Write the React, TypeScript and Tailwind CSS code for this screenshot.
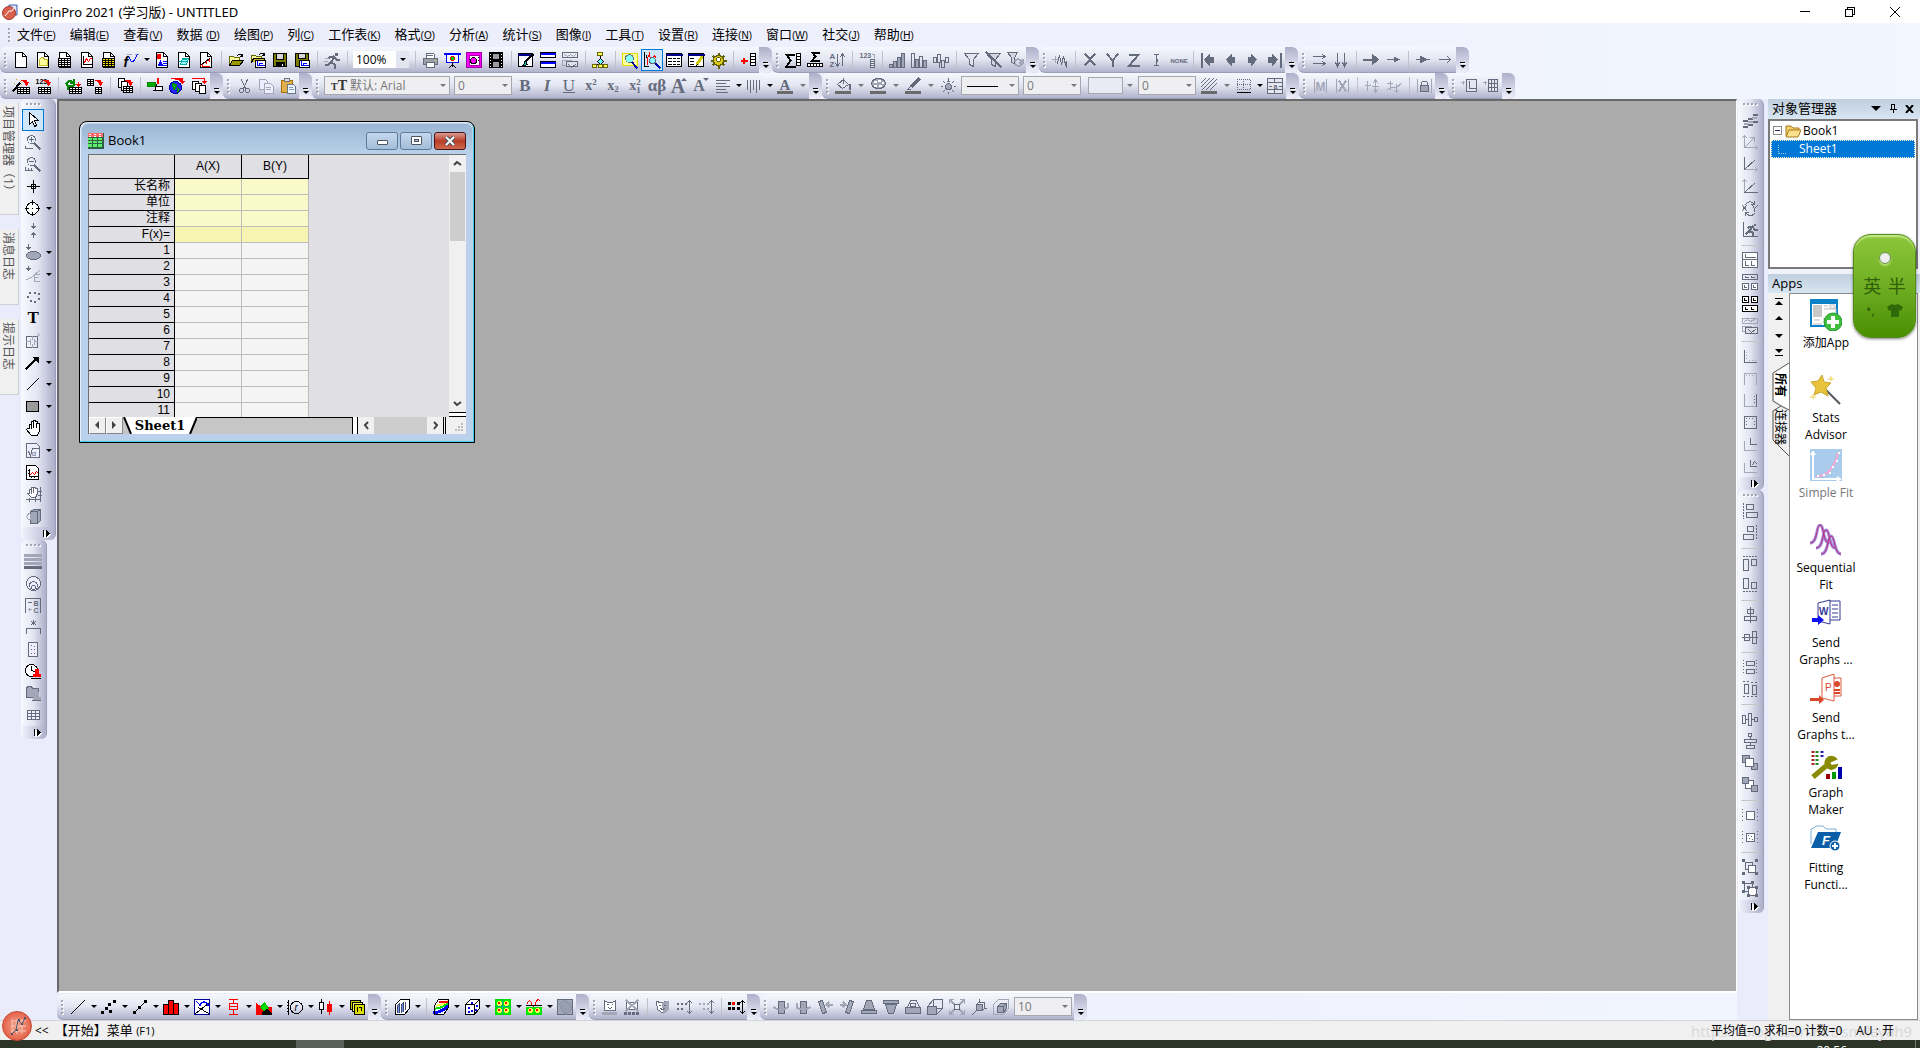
import { createElement, type ReactNode } from 'react';
import clsx from 'clsx';

/* ---------- icon drawing helpers (16 x 16 grid, integers are pixel centres) ---------- */

const K = '#000';
const G = '#646b7c';
const L = '#a2a7b8';
const R = '#f00';
const B = '#00f';
const Y = '#ffff50';

const g = (...nodes: ReactNode[]) => createElement('g', null, ...nodes);
const p = (d: string, s = K, f = 'none', w = 1) => <path d={d} stroke={s} fill={f} strokeWidth={w} />;
const box = (x: number, y: number, w: number, h: number, s = K, f = 'none') => (
  <rect x={x} y={y} width={w} height={h} stroke={s} fill={f} />
);
const ring = (x: number, y: number, r: number, s = K, f = 'none') => (
  <circle cx={x} cy={y} r={r} stroke={s} fill={f} />
);
const txt = (t: string, x: number, y: number, size: number, c = K, extra = '') => (
  <text x={x} y={y} fontSize={size} fill={c} stroke="none" className={extra}>
    {t}
  </text>
);
const page = (s = K) => g(p('M2 0h7l4 4v11h-11z', s, '#fff'), p('M9 0v4h4', s));
const grid = (x: number, y: number, cols: number, rows: number, s = K, f = '#fff', cw = 3, ch = 2) =>
  g(
    box(x, y, cols * cw, rows * ch, s, f),
    p(Array.from({ length: cols - 1 }, (_, i) => `M${x + (i + 1) * cw} ${y}v${rows * ch}`).join('') || 'M0 0', s),
    p(Array.from({ length: rows - 1 }, (_, i) => `M${x} ${y + (i + 1) * ch}h${cols * cw}`).join('') || 'M0 0', s),
  );
const redDown = p('M8 2h5v4M11 4l2 3 2-3z', R, R);
const stamp = (c: string, x: number, y: number) => p(`M${x} ${y}h3v3l-1 2h3v2h-7v-2h3l-1-2z`, c, c);
const magnifier = (s: string, f: string) => g(p('M9 9l5 5', s, 'none', 2), ring(6, 5, 4, s, f));
const layout = (x: number, y: number, w: number, h: number, s = G) =>
  g(box(x, y, w, h, s, '#fff'), p(`M${x + 2} ${y + 2}v${h - 4}h${w - 4}`, s));
const spot = (x: number, y: number) => g(ring(x, y, 2, Y, Y), box(x - 1, y - 1, 1, 1, R, R));

const icons: Record<string, ReactNode> = {
  // standard
  'New Project': page(),
  'New Folder': g(page(), p('M4 7l2-2h2l1 2h3v6h-8z', '#c9b92c', '#ffff9c')),
  'New Workbook': g(page(), grid(1, 6, 4, 4)),
  'New Graph': g(page(), p('M4 4v8h8', K), p('M5 10l2-4 2 3 2-3 1 0', R)),
  'New Matrix': g(page(), grid(1, 6, 4, 4, K, '#ffe500')),
  'New Function': g(p('M4 2h4M12 2h3', L), p('M4 4l1 0 3 5h2l4-7', B), txt('f', 0, 14, 14, K, 'font-bold italic')),
  'New Layout': g(page(), p('M3 2h3v4h-3z', R, R), p('M4 13l2-4 2 4z', B, B), p('M9 9h3M9 11h3M9 13h3', B)),
  'New Notes': g(page(), p('M4 12l2-6h6l-2 6zM3 9h7M6 7h4', '#0aa', '#9ff')),
  'Digitize': g(page(), p('M2 13l9-6v2M4 12v2h7M8 8v3', R), p('M3 12l8-6', K)),
  'Open': g(p('M1 13v-9h4l1 1h5v3', '#660', '#ffff9c'), p('M1 13l3-5h11l-4 5z', K, '#9a9a00'), p('M9 3q3-3 5 1M12 4h2v-2')),
  'Open Template': g(p('M1 10v-7h4l1 1h5v3', '#660', '#ffff9c'), p('M1 10l2-4h11v2', K, '#c9b92c'), p('M9 2q3-3 5 1M12 3h2v-2'), box(5, 8, 10, 7, K, '#fff'), p('M7 9v4h7M9 12v-1h3', B)),
  'Save': g(box(1, 1, 13, 13, K, '#7c7c00'), box(4, 1, 7, 6, K, '#d8d8d8'), box(4, 10, 8, 4, K, K), p('M10 12v1', '#fff')),
  'Save Template': g(box(1, 1, 13, 13, K, '#7c7c00'), box(4, 1, 7, 5, K, '#d8d8d8'), box(5, 8, 10, 7, K, '#fff'), p('M7 9v4h7M9 12v-1h3', B)),
  'Recalculate': g(p('M11 1h1v1h-1zM5 5l4-1 3 3h2M9 5l-2 5 3 2v3M6 10l-2 2h-3', G, 'none', 2), p('M1 6h3M0 9h3', L)),
  'Print': g(p('M4 6v-5h7l1 1v4M5 3h5', G, '#fff'), p('M1 6h14v6h-14z', G, '#9aa0a8'), box(4, 10, 8, 5, G, '#fff'), p('M13 8h0', '#ee0')),
  'Slide Show': g(p('M0 1h15', B, B, 2), box(2, 2, 12, 8, B, '#fff'), ring(8, 6, 2, R, '#0c0'), p('M8 10v4M5 15l3-3 3 3', K)),
  'Record': g(box(0, 0, 15, 15, '#a000a0', '#f0f'), box(3, 3, 10, 10, '#a000a0', '#fff'), ring(7, 8, 3, K, '#f0f'), p('M12 5h0M12 8h0', K)),
  'Video': g(box(1, 0, 13, 15, K, '#000'), box(4, 1, 7, 6, K, '#9a9aa2'), box(4, 9, 7, 6, K, '#9a9aa2'), p('M2 2h0M2 5h0M2 8h0M2 11h0M2 14h0M13 2h0M13 5h0M13 8h0M13 11h0M13 14h0', '#fff')),
  'Format Painter': g(box(0, 1, 14, 13, K, '#fff'), p('M0 2h14', '#008', K, 2), p('M14 2l-7 7', K, 'none', 2), p('M7 9l-3 5 5-2z', K, '#0cc')),
  'Merge Rows': g(box(0, 0, 15, 5, K, '#fff'), p('M1 1h13', B, B, 2), box(0, 9, 15, 6, K, '#fff'), p('M1 10h13', B, B, 2)),
  'Refresh Views': g(box(0, 0, 15, 5, G), p('M2 2l3 2 3-2 3 2 2-2', L), box(0, 8, 9, 5, L), box(4, 9, 11, 5, G, '#dfe0ea'), p('M6 12l3 3 4-3', G)),
  'Hierarchy': g(box(5, 0, 5, 3, '#660', Y), p('M8 4v2M8 11v1M2 12h12'), p('M8 6l3 3-3 3-3-3z', K, '#6ff'), box(0, 12, 4, 3, '#660', Y), box(6, 12, 4, 3, '#660', Y), box(11, 12, 4, 3, '#660', Y)),
  'Project Explorer': g(p('M0 1h15v12h-15z', '#dd0', '#ffffa0'), p('M9 9l5 6', '#00a', 'none', 2), ring(7, 6, 4, G, '#8ff')),
  'Object Manager': g(p('M0 0v14h4M2 3v2M0 5h0M0 9h0'), p('M3 12v-6l2-5 1 6 4-4 1 2', R), p('M10 10l5 5', '#00a', 'none', 2), ring(8, 8, 3, G, '#8ff')),
  'Results Log': g(box(0, 1, 15, 13, K, '#fff'), p('M0 2h15', '#008', K, 2), p('M2 6h3M7 6h2M11 6h2M2 9h3M7 9h2M11 9h2M2 12h3M7 12h2M11 12h2')),
  'Script Window': g(box(0, 1, 15, 13, K, '#fff'), p('M0 2h15', '#008', K, 2), p('M2 6h3M2 9h3M2 12h3'), p('M13 5l-4 6', '#cc0', 'none', 3), p('M8 13l1-1')),
  'Code Builder': g(p('M8 1v14M1 8h14M3 4l10 8M3 12l10-8', '#5f5f00', 'none', 2), ring(8, 8, 5, '#5f5f00', '#d8c820'), ring(8, 7, 2, '#5f5f00', '#fff')),
  'Add Column': g(p('M1 8h5M3 6v4', R, R, 2), grid(10, 1, 1, 4, K, '#fff', 5, 3)),
  // column
  'Statistics on Columns': g(p('M8 2h-7l4 6-4 6h8', K, 'none', 2), grid(11, 1, 1, 4, K, '#fff', 4, 3)),
  'Statistics on Rows': g(p('M11 0h-6l3 4-3 4h6', K, 'none', 2), grid(0, 11, 5, 1, K, '#fff', 3, 3)),
  'Sort': g(txt('A', 0, 6, 8, G, 'font-bold'), txt('Z', 0, 14, 8, G, 'font-bold'), p('M8 2v11M6 11l2 3 2-3M13 13v-11M11 4l2-3 2 3', G)),
  'Set Column Values': g(txt('123', 0, 5, 7, G, 'font-bold'), p('M13 2h2v3', L), grid(11, 7, 1, 4, G, '#eee', 4, 2)),
  'Column Plot': g(box(0, 12, 3, 3, G, L), box(4, 9, 3, 6, G, L), box(8, 5, 3, 10, G, L), box(12, 1, 3, 14, G, L)),
  'Histogram': g(box(0, 1, 3, 14, G), box(4, 7, 3, 8, G, L), box(8, 4, 3, 11, G), box(12, 8, 3, 7, G, L)),
  'Normalize': g(box(0, 5, 3, 5, G), box(4, 2, 3, 8, G), box(8, 8, 3, 7, G), box(12, 5, 3, 5, G), p('M6 11v4', G)),
  'Filter': p('M1 1h14l-5 6v7l-4-2v-5z', G, '#e4e5ee'),
  'Disable Filter': g(p('M1 1h14l-5 6v7l-4-2v-5z', G, '#d4d5de'), p('M1 0l14 14', G, 'none', 2)),
  'Reapply Filter': g(p('M0 0h10l-3 5v6l-3-1v-5z', G, '#d4d5de'), p('M8 8q3-3 6 1M15 7v3h-3M14 12q-3 3-6 0', L, 'none', 2)),
  // axes
  'Average Curves': g(p('M0 7h6M3 4v6', L), p('M5 11l2-8 2 9 2-8 2 8 1-3v6', G)),
  'Set X': p('M3 2l9 10M12 2l-9 10', G, 'none', 2),
  'Set Y': p('M3 2l5 6 5-6M8 8v5', G, 'none', 2),
  'Set Z': p('M3 2h9l-9 11h9', G, 'none', 2),
  'Set Error': g(p('M6 2h4M6 13h4M8 2v11', G), p('M8 7v1', G, 'none', 2)),
  'Set None': g(txt('NONE', 0, 10, 6, G, 'font-bold')),
  'First': g(p('M1 1v13', G, G, 2), p('M4 7l5-5v3h4v5h-4v3z', G, G)),
  'Previous': p('M4 7l5-5v3h3v5h-3v3z', G, G),
  'Next': p('M12 7l-5-5v3h-3v5h3v3z', G, G),
  'Last': g(p('M14 1v13', G, G, 2), p('M11 7l-5-5v3h-4v5h4v3z', G, G)),
  'Horizontal Arrows': p('M2 4h11M11 2l3 2-3 2M2 11h11M11 9l3 2-3 2', G),
  'Vertical Arrows': p('M4 1v12M2 10l2 4 2-4M11 1v12M9 10l2 4 2-4', G),
  'Large Arrow': g(p('M0 7h9', G, G, 2), p('M9 2l6 5-6 5z', G, G)),
  'Small Arrow': g(p('M2 7h10', G), p('M9 5l4 2-4 2z', G, G)),
  'Filled Arrow': g(p('M1 7h13', G), p('M5 4l6 3-6 3z', G, G)),
  'Open Arrow': p('M2 7h11M10 4l3 3-3 3', G),
  // import
  'Import Wizard': g(p('M0 12l6-7', K, 'none', 2), p('M3 1h0M7 3h0M1 5h0M8 6h0', '#da0'), redDown, grid(4, 9, 4, 3)),
  'Import ASCII': g(txt('123', 0, 5, 7, K, 'font-bold'), redDown, grid(3, 9, 4, 3)),
  'Reimport': g(p('M1 5q3-5 7-1M8 1v3h-3M9 6q-4 4-7 1M2 10v-3h2', '#080', 'none', 2), p('M13 4v3M11 6l2 2 2-2z', R, R), grid(4, 9, 4, 3)),
  'Import Sheet': g(grid(0, 1, 2, 3), redDown, grid(8, 9, 2, 3)),
  'Clone Import': g(box(1, 0, 6, 9, K, '#fff'), box(4, 3, 6, 9, K, '#fff'), redDown, grid(6, 8, 3, 3)),
  'Database': g(p('M0 4h8v4h-8z', '#080', '#0a0'), p('M9 6v6h-3', K), p('M10 0v4', R, R, 2), box(8, 8, 7, 4, K, '#fff')),
  'Web': g(ring(6, 9, 6, '#00a', '#22f'), p('M3 5l4 1-1 4-2 1zM8 9l2 2-2 3z', '#080', '#0a0'), p('M2 0h11v3M11 3l2 2 2-2z', R, R)),
  'Import Multiple': g(box(1, 3, 6, 8, K, '#fff'), box(4, 5, 6, 8, K, '#fff'), box(8, 7, 6, 8, K, '#fff'), p('M1 0h12v3', R), p('M11 3l2 2 2-2z', R, R)),
  // edit
  'Cut': g(p('M5 1l4 9M11 1l-4 9', G, 'none', 1), ring(5, 12, 2, G), ring(11, 12, 2, G)),
  'Copy': g(p('M1 1h6l2 2v8h-8z', L, '#eef'), p('M6 5h6l3 3v7h-9z', L, '#eef'), p('M8 9h4M8 11h4', L)),
  'Paste': g(box(1, 2, 11, 12, '#a87008', '#e2b04a'), box(4, 0, 5, 3, '#777', '#ddd'), p('M7 6h6l2 2v7h-8z', '#678', '#eef6ff'), p('M9 9h3M9 11h4', '#89b')),
  // format
  'Font Colour': g(txt('A', 2, 11, 15, G, 'font-bold font-[Liberation_Serif]'), p('M1 14h13', '#6a6a6a', G, 3)),
  'Align': p('M1 2h13M1 5h9M1 8h13M1 11h9M1 14h11', G),
  'Line Pattern': p('M1 2v9M4 2v12M7 2v9M10 2v12M13 2v9', G),
  'Fill': g(p('M2 6l6-5 5 5-6 4z', G, '#e4e5ee'), p('M8 0v5', G), p('M14 6v4', G, 'none', 2), p('M1 14h13', '#6a6a6a', G, 3)),
  'Palette': g(<ellipse cx={8} cy={5} rx={7} ry={5} stroke={G} fill={L} />, p('M4 3h1M8 2h1M12 4h0M4 7h1M9 7h1', '#fff', '#fff', 2), p('M1 14h13', '#6a6a6a', G, 3)),
  'Line Colour': g(p('M13 1l-6 6', G, 'none', 3), p('M5 8l-2 2M2 11h3', G), p('M1 14h13', '#6a6a6a', G, 3)),
  'Light': g(ring(8, 8, 3, G, L), p('M8 0v2M8 14v1M1 8h1M14 8h1M3 3l1 1M12 12l1 1M3 13l1-1M12 4l1-1M7 3h2', G)),
  'Hatch': g(p('M0 4l4-4M0 8l8-8M1 11l11-11M5 11l10-10M9 11l6-6', G), p('M1 14h13', '#6a6a6a', G, 3)),
  'Borders': g(<path d="M1 1h13v10h-13zM7 1v10M1 6h13" stroke={G} strokeDasharray="0 2" />, p('M1 14h13', K, K, 1)),
  'Merge Cells': g(box(0, 0, 15, 15, G, '#e4e5ee'), p('M0 4h15M0 11h15M7 0v4M7 11v4M2 8h2M12 8h2', G), txt('a', 6, 10, 7, G, 'font-bold')),
  'Mask': g(p('M2 1v13M14 1v13', L), txt('M', 3, 12, 12, L, 'font-bold')),
  'Unmask': g(p('M2 1v13M14 1v13', L), p('M5 3l6 9M11 3l-6 9', L, 'none', 2)),
  'Shift Rows': p('M3 3v9M1 7h5M11 1v13M9 4l2-3 2 3M9 11l2 3 2-3M8 8h6', L, 'none', 1),
  'Shift Curve': p('M1 5h5M4 3v8M1 11l5-2 4 0 5-4M10 6v8M8 12l2 2 2-2', L, 'none', 1),
  'Lock': g(p('M1 1v13M15 1v13', L), p('M5 7v-3q3-3 6 0v3', G), box(4, 7, 8, 6, G, L)),
  'Add Layer': g(p('M0 4h3M2 3v3', L), box(5, 1, 10, 12, G, '#e4e5ee'), p('M8 3v7h6', G)),
  'Add Table': g(p('M0 4h3M2 3v3', L), grid(5, 1, 3, 3, G, '#e4e5ee', 3, 4)),
  // tools
  'Pointer': p('M4 0v12l3-3 2 5 2-1-2-5h4z', K, '#fff'),
  'Zoom In': g(magnifier(G, '#e8eef8'), p('M4 5h4M6 3v4M0 12v2h7', G)),
  'Zoom Out': g(magnifier(G, '#e8eef8'), p('M4 5h4M0 11v3h7M3 12v2M6 12v2', G)),
  'Reader': g(p('M8 2v12M2 8h12'), box(6, 6, 4, 4)),
  'Data Reader': g(ring(7, 8, 6, K, '#fff'), p('M7 0v4M7 12v3M0 8h3M11 8h3M7 8h0')),
  'Data Selector': p('M8 1v5M6 4l2 2 2-2zM8 15v-5M6 12l2-2 2 2z', G, G),
  'Region Mask': g(p('M3 0v5M1 3l2 2 2-2z', G, G), <ellipse cx={8} cy={11} rx={7} ry={4} stroke={G} fill={L} />),
  'Curve Mask': g(p('M3 0v4M1 2l2 2 2-2z', G, G), p('M1 13l5-2 8-7M9 8h5M9 8v7h5M9 11h3', L)),
  'Draw Data': p('M4 4h0M9 4h0M13 5h0M2 8h0M5 12h0M13 10h0M9 13h0', G, G, 2),
  'Text': txt('T', 2, 12, 17, K, 'font-bold font-[Liberation_Serif]'),
  'Annotation': g(box(1, 4, 11, 11, G), p('M7 4v3M7 12v3M1 9h3M9 9h3M5 7v5M9 7v5', L), txt('A', 11, 4, 6, L)),
  'Arrow': g(p('M1 14l9-9', K, 'none', 2), p('M8 3h5v5z', K, K)),
  'Line': p('M2 13l11-11', K, 'none', 1),
  'Rectangle': box(1, 3, 12, 10, K, '#9b9b9b'),
  'Pan': g(p('M4 8v-4h2v-3h2v-1h2v1h2v2h2v7l-2 5h-6l-5-6 1-1z', K, '#fff'), p('M6 4v4M8 2v5M11 3v4')),
  'Equation': g(p('M1 1h10l3 3v11h-13z', G, '#eef'), p('M3 9l2 4 2-7h6', G), txt('α', 6, 13, 8, G)),
  'Insert Graph': g(p('M1 1h9l3 3v11h-12z', K, '#fff'), p('M4 5v7h8M3 6h0M3 9h0M6 13h0M9 13h0'), p('M5 10l2-2 2 2 2-3 1 1', R)),
  'Pan Axis': g(p('M4 7v-4h2v-2h4v1h2v5l-2 4h-4l-4-4z', G, '#fff'), p('M6 3v4M8 2v4M15 1v14M13 5h3M13 9h3M1 13h14M4 12v3M10 12v3', G)),
  'Rotate 3D': g(p('M5 3l3-2h7v11l-3 3h-7z', G, L), p('M5 3h7v12M12 3l3-2', G), p('M1 8q2-4 4-2v5q-2 1-4-3', L)),
  // object
  'Line Width': g(p('M0 2h15M0 6h15M0 10h15', L, L, 3), p('M0 14h15', G, G, 3)),
  'Circles': g(ring(8, 8, 7, G, '#eef'), ring(8, 10, 4, G, '#eef'), ring(8, 12, 2, G)),
  'Legend': g(p('M0 15v-14h15v14', G), p('M3 5h3', G), p('M3 12h3M4 11v2', L), txt('B', 8, 8, 7, G, 'font-bold'), txt('C', 8, 15, 7, G, 'font-bold')),
  'Asterisk Bracket': g(p('M8 1v4M6 2l4 3M10 2l-4 3', G), p('M1 14v-5h14v5', G)),
  'Scale': g(box(3, 1, 9, 14, G, '#eef'), p('M6 4h0M6 8h0M6 12h0M9 5h0M9 8h0M9 12h0', G, G)),
  'Date Stamp': g(ring(6, 7, 6, K, '#fff'), p('M6 3v4l3 1'), stamp(R, 10, 6), p('M6 15h9')),
  'Project Stamp': g(p('M1 3l1-2h4l1 2h6v9h-12z', G, L), stamp(L, 10, 7), p('M7 15h8', G)),
  'Table': grid(2, 3, 3, 3, G, '#eef', 4, 3),
  // layers
  'Stagger': g(p('M6 6h3M11 2h3M1 8h3M6 6h3M11 9h3M6 12h3M1 14h3', G, 'none', 2), p('M10 5h3M6 9h3M2 11h2', L, 'none', 2)),
  'Rotate Axes': g(p('M2 1v12h13M0 3l2-2 2 2M13 11l2 2-2 2', L), p('M3 12l8-8M8 3h4v4', L)),
  'Skew Axes': g(p('M2 13h13M13 11l2 2-2 2', L), p('M2 1v12l10-9', G)),
  'Reset Axes': g(p('M2 1v12M0 3l2-2 2 2', L), p('M2 14h13M3 13l9-8', G)),
  'Swap XY': g(p('M3 4q4-5 8-1M12 1v3h-3M12 13q-4 4-8 0M3 15v-3h3M0 5l4 5M4 5l-4 5M10 5l2 3 3-3M12 8v3', G)),
  'Speed Mode': g(p('M1 0v14h14', G), p('M12 2h0M6 5l4-1 2 3h2M9 5l-2 4 3 1v2M6 9l-2 2', G, 'none', 2)),
  'Merge Layers': g(box(0, 0, 15, 15, G, '#fff'), p('M3 2v3h10M3 9v4h3M9 9v4h3M0 7h15', G)),
  'Extract Layers': g(box(0, 0, 15, 5, G), p('M3 2v1h3M9 2v1h3', G), layout(0, 9, 6, 6), layout(9, 9, 6, 6)),
  'Arrange Layers': g(layout(0, 0, 6, 6, K), layout(9, 0, 6, 6, K), box(0, 9, 15, 6, K, '#fff'), p('M3 11v2h2M9 11v2h2')),
  'Duplicate Layers': g(box(0, 0, 15, 5, L), p('M2 3l3-2 3 2 4-2', L), box(0, 8, 9, 5, L), box(3, 9, 12, 6, G, '#dfe0ea'), p('M6 11l3 3 4-3', G)),
  'Axis Bottom Left': g(p('M2 2v12h12', G), p('M4 4h0M4 7h0M4 10h0M7 12h0M10 12h0M13 12h0', L)),
  'Axis Top': g(p('M2 14v-11h12v11', L), p('M4 5h0M7 5h0M10 5h0', L)),
  'Axis Right': g(p('M2 2v12h12', L), p('M14 2v12M12 4h0M12 7h0M12 10h0', G)),
  'Axis Frame': g(box(2, 2, 12, 12, G), p('M4 4h0M7 4h0M10 4h0M4 7h0M4 10h0M12 7h0M12 10h0', G)),
  'Inset': g(p('M2 5v9h12', L), p('M8 2v6h6', G)),
  'Inset Data': g(p('M2 5v9h12', L), p('M8 2v6h6M10 6l2-3 2 2', G)),
  // alignment
  'Align Left': g(p('M1 0v1M1 3v1M1 6v1M1 9v1M1 12v1M1 15v0', G), box(4, 1, 7, 5, G), box(4, 9, 11, 5, G)),
  'Align Right': g(p('M14 0v1M14 3v1M14 6v1M14 9v1M14 12v1', G), box(5, 1, 6, 5, G), box(1, 9, 10, 5, G)),
  'Align Top': g(p('M1 1h1M4 1h1M7 1h1M10 1h1M13 1h1', G), box(1, 4, 5, 11, G), box(9, 4, 5, 6, G)),
  'Align Bottom': g(p('M1 14h1M4 14h1M7 14h1M10 14h1M13 14h1', G), box(1, 1, 5, 10, G), box(9, 5, 5, 6, G)),
  'Align Centre': g(p('M8 0v15', G), box(5, 2, 6, 4, G), box(2, 9, 12, 4, G)),
  'Align Middle': g(p('M0 8h15', G), box(2, 5, 5, 6, G), box(10, 2, 4, 12, G)),
  'Same Width': g(box(4, 2, 8, 4, G), box(4, 10, 8, 4, G), p('M1 1h0M1 4h0M1 7h0M14 1h0M14 4h0M14 7h0M1 10h0M1 13h0M14 10h0M14 13h0', G)),
  'Same Height': g(box(2, 3, 4, 9, G), box(10, 4, 4, 9, G), p('M1 0h1M5 0h1M9 1h1M13 1h1M1 15h1M5 15h1M9 15h1M13 15h1', G)),
  'Distribute H': g(box(0, 4, 3, 8, G), box(6, 2, 3, 12, G), box(12, 6, 3, 4, G), p('M4 8h1M10 8h1', G)),
  'Distribute V': g(box(6, 0, 3, 3, G), box(2, 6, 12, 3, G), box(4, 12, 8, 3, G), p('M8 4v1M8 10v1', G)),
  'Bring Front': g(box(0, 0, 7, 7, G, L), box(9, 8, 6, 6, G, L), box(3, 3, 8, 8, G, '#fff')),
  'Send Back': g(box(3, 3, 8, 8, G, '#fff'), box(0, 0, 6, 6, G, L), box(9, 8, 6, 6, G, L)),
  'Group Edit': g(box(4, 4, 8, 8, G, '#fff'), p('M0 2h0M0 5h0M0 9h0M0 13h0M15 2h0M15 5h0M15 9h0M15 13h0', G)),
  'Ungroup Edit': g(box(4, 4, 8, 8, G, '#fff'), p('M6 6h0M9 7h0M7 9h0M10 10h0M0 2h0M0 5h0M0 9h0M0 13h0M15 2h0M15 5h0M15 9h0M15 13h0', G)),
  'Group': g(box(3, 3, 7, 7, G), box(6, 6, 7, 7, G, '#fff'), p('M1 1h0M14 1h0M1 14h0M14 14h0', G, G, 3)),
  'Ungroup': g(box(2, 2, 8, 8, G), box(6, 6, 8, 8, G, '#fff'), p('M1 1h0M10 1h0M1 10h0M6 6h0M14 6h0M6 14h0M14 14h0', G, G, 3)),
  // 2D graphs
  'Line Plot': p('M1 14l13-13'),
  'Scatter Plot': p('M1 13h0M5 9h0M9 12h0M8 5h0M13 2h0', K, K, 3),
  'Line + Symbol': g(p('M2 13l11-11'), p('M2 13h0M7 8h0M13 2h0', K, K, 3)),
  'Bar Plot': g(box(0, 5, 5, 10, K, R), box(5, 1, 5, 14, K, R), box(10, 4, 5, 11, K, R)),
  'Multi Panel': g(box(0, 0, 15, 15, '#009', '#fff'), p('M1 14l13-10M4 8l10 6'), p('M2 2l3 3 4-3 4 2', B), p('M5 5h0M9 2h0M13 5h0', B, B, 2)),
  'Box Plot': p('M4 0h8M8 0v4M4 4h8v6h-8zM4 7h8M8 10v5M4 15h8', R),
  'Area Plot': g(p('M0 4l6 5 9-1v7h-15z', R, R), p('M4 8l4-5 4 6-4 3z', '#0b0', '#0d0'), p('M6 13l5-3 4 4v1h-9z', K, K)),
  'Polar Plot': g(p('M1 1v14M0 3h1M0 6h1M0 9h1M0 12h1'), ring(9, 8, 6), txt('r', 7, 11, 10, K, 'italic')),
  'Stock Plot': g(p('M3 0v14'), box(1, 3, 4, 7, K, '#fff'), p('M11 2v13', R), box(9, 5, 4, 7, R, R)),
  'Template Library': g(box(1, 1, 10, 9, K, '#cc0'), box(3, 3, 10, 9, K, Y), box(5, 5, 10, 10, K, '#dd0'), p('M8 12v-4M10 8h2v3')),
  // 3D graphs
  '3D Bars': g(p('M1 5l5-5h9v9l-5 6h-9z', K, '#fff'), p('M3 13v-7l2-2v9M7 13v-8l2-2v9M11 10v-7', '#446', '#69f')),
  '3D Surface': g(p('M1 6l4-6h10v8l-5 7h-9z', K, '#fff'), p('M1 13q6 0 13-6', B, 'none', 3), p('M2 9q6 0 12-5', '#0d0', 'none', 2), p('M3 6q5 0 11-4', Y, 'none', 2), p('M6 2h7', R, 'none', 2), p('M1 6l4-6h10v8l-5 7h-9z')),
  '3D Scatter': g(p('M1 5l5-5h9v9l-5 6h-9zM1 5h9v10M10 5l5-5', K, '#fff'), p('M4 8h0M7 11h0M7 3h0M12 6h0M4 12h0M11 10h0', B, B, 2)),
  'Contour': g(box(0, 0, 15, 15, '#0d0', '#0e0'), p('M7 0v15M0 7h15', '#0a8'), spot(4, 4), spot(11, 4), spot(4, 11), spot(11, 11)),
  'Heatmap': g(p('M1 4q2-6 4 0t4 0 4-3', R), p('M0 6h15'), box(0, 8, 15, 7, '#0d0', '#0e0'), spot(4, 11), spot(11, 11)),
  'Image Plot': g(box(0, 0, 15, 15, G, L), p('M2 4l5-3 6 3 1 6-5 5-5-4z', '#8f95a8', '#989eb0')),
  // mask
  'Mask Points': g(p('M2 1l3 2h5l3-2v10h-11z', G, '#fff'), p('M5 5h1M10 5h0M6 8h0M7 9h1M9 8h0', G), p('M1 14h1M5 14h1M9 14h1M13 14h0', L, L, 3)),
  'Unmask Points': g(p('M2 1l3 2h5l3-2v9h-11z', G, '#fff'), p('M2 1l11 10M13 1l-11 10', L, 'none', 2), p('M1 14h0M5 14h0M9 14h0M13 14h0', G, G, 3)),
  'Mask Colour': g(p('M2 2l4 1 8-1v8l-5 4-6-4z', G, '#fff'), p('M8 3l6-1v8l-5 4z', L, L), p('M5 6h1M10 6h1M6 9l2 1 2-1', G)),
  'Mask Swap': g(p('M1 4h0M5 4h0M9 4h0M1 9h0M5 9h0', G, G, 2), p('M13 1v13M11 3l2-2 2 2M11 12l2 2 2-2', G)),
  'Mask Toggle': g(p('M1 4h0M5 4h0M9 4h0M5 9h0M9 9h0', L, L, 2), p('M13 1v13M11 3l2-2 2 2M11 12l2 2 2-2', G)),
  'Enable Mask': g(p('M1 4h0M10 4h0M1 9h0M5 9h0M10 9h0', K, K, 3), p('M5 4h0', R, R, 3), p('M14 1v13M12 3l2-2 2 2M12 12l2 2 2-2')),
  // 3D rotation
  'Rotate Left': g(box(5, 2, 6, 12, G, L), p('M1 8q6 5 13 0v-4', L, 'none', 2)),
  'Rotate Right': g(box(5, 2, 6, 12, G, L), p('M14 8q-6 5-13 0v-4', L, 'none', 2)),
  'Tilt Left': g(p('M1 2l4-1 4 12-4 1z', G, L), p('M9 5h5M11 3l-2 2 2 2', L, 'none', 2)),
  'Tilt Right': g(p('M14 2l-4-1-4 12 4 1z', G, L), p('M1 5h5M4 3l2 2-2 2', L, 'none', 2)),
  'Tilt Up': g(p('M5 1h5l3 9h-11zM0 11h15v3h-15z', G, L)),
  'Tilt Down': g(p('M5 14h5l3-9h-11zM0 1h15v3h-15z', G, L)),
  'Perspective In': g(p('M5 1h6l3 7h-12z', G, '#e8e9f2'), box(0, 8, 15, 6, G, L), box(5, 4, 5, 3, G)),
  'Perspective Out': g(box(6, 0, 9, 9, G, '#e8e9f2'), box(0, 7, 9, 8, G, L), p('M0 7l6-7M9 15l6-6', G)),
  'Fit Frame': g(box(5, 5, 5, 5, G, '#e8e9f2'), p('M1 1l3 3M14 1l-3 3M1 14l3-3M14 14l-3-3', L, 'none', 2), p('M0 4v-4h4M11 0h4v4M0 11v4h4M11 15h4v-4', L)),
  'Reset Rotation': g(p('M5 5h6v6h-6z', G, L), p('M5 5l2-2h6v6l-2 2M8 0v3M14 9h1M5 11l-4 4', G)),
  'Reset Frame': g(p('M0 5l5-5h10v9l-5 6h-10z', L), p('M4 7l3-3h6v5l-3 4h-6zM4 7h6v6M10 7l3-3', G, L)),
};

const textIcons: Record<string, ReactNode> = {
  Bold: <b>B</b>,
  Italic: <b className="italic">I</b>,
  Underline: <span className="underline">U</span>,
  Superscript: <span className="text-sm font-bold">x<sup className="text-[9px]">2</sup></span>,
  Subscript: <span className="text-sm font-bold">x<sub className="text-[9px]">2</sub></span>,
  'Super-Subscript': (
    <span className="flex items-center text-sm font-bold">
      x
      <span className="flex flex-col text-[9px] leading-[8px]">
        <span>2</span>
        <span>1</span>
      </span>
    </span>
  ),
  Greek: <b className="text-[17px]">αβ</b>,
  'Increase Font': (
    <b className="flex items-start text-xl leading-4">
      A<i className="-ml-1 h-0 w-0 border-x-[3px] border-b-[3px] border-x-transparent border-b-[#646b7c]" />
    </b>
  ),
  'Decrease Font': (
    <b className="flex items-start text-base leading-4">
      A<i className="-ml-0.5 h-0 w-0 border-x-[3px] border-t-[3px] border-x-transparent border-t-[#646b7c]" />
    </b>
  ),
};

function Glyph({ name }: { name: string }) {
  if (textIcons[name]) {
    return (
      <span className="flex h-4 items-center justify-center whitespace-nowrap font-['Liberation_Serif',serif] text-[17px] leading-4 text-[#646b7c]">
        {textIcons[name]}
      </span>
    );
  }
  return (
    <svg
      width="16"
      height="16"
      viewBox="-0.5 -0.5 16 16"
      fill="none"
      strokeLinecap="square"
      shapeRendering="crispEdges"
      className="shrink-0 overflow-visible font-['Liberation_Sans',sans-serif]"
      aria-hidden="true"
    >
      {icons[name]}
    </svg>
  );
}

/* ---------- toolbars ---------- */

const Caret = ({ className = 'border-t-black' }: { className?: string }) => (
  <span className={clsx('block h-0 w-0 border-x-[3px] border-t-[3px] border-x-transparent', className)} />
);

function Grip({ vertical }: { vertical?: boolean }) {
  return (
    <span className={clsx('flex shrink-0 items-center gap-[2px]', vertical ? 'h-[10px] pl-1' : 'w-[10px] flex-col justify-center pr-px')}>
      {[0, 1, 2, 3].map((i) => (
        <i key={i} className="h-[2px] w-[2px] bg-[#a3a4b4] shadow-[1px_1px_0_#fff]" />
      ))}
    </span>
  );
}

/* '|' is a separator, a trailing '>' adds a drop-down arrow, '>>' a wide one, '*' marks the pressed button */
type Item = string | { node: ReactNode };

function Bar({ items, label, vertical, wide }: { items: Item[]; label: string; vertical?: boolean; wide?: boolean }) {
  return (
    <div
      role="toolbar"
      aria-label={label}
      className={clsx(
        'flex shrink-0',
        vertical
          ? 'flex-col rounded-md border-r border-[#9c9db8] bg-linear-to-r from-[#f8faff] via-[#e2e4f1] to-[#adafca] pl-px'
          : 'h-[26px] items-stretch rounded-md border-b border-[#9c9db8] bg-linear-to-b from-[#f6f8fe] via-[#e3e5f1] to-[#b1b3cc]',
        vertical && (wide ? 'w-[35px]' : 'w-[26px]'),
      )}
    >
      <Grip vertical={vertical} />
      {items.map((item, i) => {
        if (typeof item !== 'string') return <div key={i} className="flex items-center">{item.node}</div>;
        if (item === '|')
          return (
            <span key={i} className={clsx('flex items-center justify-center', vertical ? 'h-2' : 'w-2')}>
              <i className={vertical ? 'h-px w-5 bg-[#c5c6c8]' : 'h-[18px] w-px bg-[#c0c1c8]'} />
            </span>
          );
        const name = item.replace(/[>*]/g, '');
        const drop = item.includes('>');
        const faded = item.endsWith('>>');
        return (
          <div key={i} className="flex items-center">
            <button
              type="button"
              aria-label={name}
              className={clsx(
                'flex h-[22px] w-[22px] items-center justify-center',
                item.includes('*') && 'border border-[#0078d7] bg-[#cfe5f8]',
              )}
            >
              <Glyph name={name} />
            </button>
            {drop && (
              <button type="button" aria-label={`${name} options`} className={clsx('flex h-[22px] items-center justify-center', faded ? 'w-[13px]' : 'w-[9px]')}>
                <Caret className={faded ? 'border-t-[#777]' : undefined} />
              </button>
            )}
          </div>
        );
      })}
      <button
        type="button"
        aria-label={`${label} options`}
        className={clsx(
          'flex from-[#aeb0ca] to-[#f0f0fc]',
          vertical
            ? 'h-[13px] w-full items-center justify-end rounded-b-md bg-linear-to-l pr-1'
            : '-mb-px w-[13px] flex-col items-center justify-end gap-[2px] rounded-r-md bg-linear-to-b pb-[5px]',
        )}
      >
        {vertical ? (
          <svg width="8" height="8" viewBox="0 0 8 8" shapeRendering="crispEdges" aria-hidden="true">
            <path d="M1 1h2v7h-2zM4 1l4 3-4 4z" fill="#fff" />
            <path d="M0 0h1v7h-1zM3 0h1v1h1v1h1v1h1v1h-1v1h-1v1h-1v1h-1z" />
          </svg>
        ) : (
          <>
            <i className="h-px w-[5px] bg-black shadow-[1px_1px_0_#fff]" />
            <Caret />
          </>
        )}
      </button>
    </div>
  );
}

function Combo({ label, value, className, icon, enabled }: { label: string; value: string; className: string; icon?: ReactNode; enabled?: boolean }) {
  return (
    <div
      className={clsx(
        'relative mx-[2px] flex items-center',
        enabled ? 'h-[17px] bg-white text-black' : 'h-[19px] border border-[#a6a6ae] bg-[#efeff2] text-[#777]',
        className,
      )}
    >
      {icon}
      <select aria-label={label} className="h-full min-w-0 flex-1 appearance-none bg-transparent pl-[3px] text-xs leading-4 outline-none" defaultValue={value}>
        <option>{value}</option>
      </select>
      <span className={clsx('pointer-events-none absolute inset-y-0 right-0 flex w-[13px] items-center justify-center', enabled && 'bg-[#e3e5f1]')}>
        <Caret className={enabled ? undefined : 'border-t-[#777]'} />
      </span>
    </div>
  );
}

const solidLine = <i className="pointer-events-none absolute left-[5px] top-[9px] h-px w-[31px] bg-black" />;
const fontMark = <b className="pl-1.5 font-['Liberation_Serif',serif] text-[10px] text-[#333]">T<span className="text-sm">T</span></b>;
const colourBox = (
  <div className="flex items-center">
    <button type="button" aria-label="Line fill" className="ml-[5px] h-[17px] w-[35px] border border-[#a6a6ae] bg-[#e8eaf4]" />
    <span className="flex w-[13px] justify-center"><Caret className="border-t-[#777]" /></span>
  </div>
);

const row1: { label: string; items: Item[] }[] = [
  {
    label: 'Standard',
    items: [
      'New Project', 'New Folder', 'New Workbook', 'New Graph', 'New Matrix', 'New Function>', 'New Layout', 'New Notes', 'Digitize', '|',
      'Open', 'Open Template', 'Save', 'Save Template', '|', 'Recalculate', '|',
      { node: <Combo label="Zoom" value="100%" className="w-14" enabled /> }, '|',
      'Print', 'Slide Show', 'Record', 'Video', '|', 'Format Painter', 'Merge Rows', 'Refresh Views', '|', 'Hierarchy', '|',
      'Project Explorer', 'Object Manager*', 'Results Log', 'Script Window', 'Code Builder', '|', 'Add Column',
    ],
  },
  {
    label: 'Column',
    items: ['Statistics on Columns', 'Statistics on Rows', 'Sort', '|', 'Set Column Values', '|', 'Column Plot', 'Histogram', 'Normalize', '|', 'Filter', 'Disable Filter', 'Reapply Filter'],
  },
  { label: 'Designation', items: ['Average Curves', '|', 'Set X', 'Set Y', 'Set Z', 'Set Error', 'Set None', '|', 'First', 'Previous', 'Next', 'Last'] },
  { label: 'Arrow', items: ['Horizontal Arrows', 'Vertical Arrows', '|', 'Large Arrow', 'Small Arrow', '|', 'Filled Arrow', 'Open Arrow'] },
];

const row2: { label: string; items: Item[] }[] = [
  { label: 'Import', items: ['Import Wizard', 'Import ASCII', '|', 'Reimport', 'Import Sheet', '|', 'Clone Import', '|', 'Database', 'Web', 'Import Multiple'] },
  { label: 'Edit', items: ['Cut', 'Copy', 'Paste'] },
  {
    label: 'Format',
    items: [
      { node: <Combo label="Font" value="默认: Arial" className="w-[126px]" icon={fontMark} /> },
      { node: <Combo label="Font size" value="0" className="w-[58px]" /> },
      'Bold', 'Italic', 'Underline', 'Superscript', 'Subscript', 'Super-Subscript', 'Greek', 'Increase Font', 'Decrease Font',
      'Align>', 'Line Pattern>', 'Font Colour>>',
    ],
  },
  {
    label: 'Style',
    items: [
      'Fill>>', 'Palette>>', 'Line Colour>>', 'Light',
      { node: <Combo label="Line style" value="" className="w-[58px]" icon={solidLine} /> },
      { node: <Combo label="Line width" value="0" className="w-[58px]" /> },
      { node: colourBox },
      { node: <Combo label="Pattern width" value="0" className="w-[58px]" /> },
      'Hatch>>', 'Borders>', 'Merge Cells',
    ],
  },
  { label: 'Mask data', items: ['Mask', 'Unmask', '|', 'Shift Rows', 'Shift Curve', '|', 'Lock'] },
  { label: 'Layer', items: ['Add Layer', 'Add Table'] },
];

const bottomRow: { label: string; items: Item[] }[] = [
  { label: '2D Graphs', items: ['Line Plot>', 'Scatter Plot>', 'Line + Symbol>', 'Bar Plot>', 'Multi Panel>', 'Box Plot>', 'Area Plot>', 'Polar Plot>', 'Stock Plot>', 'Template Library'] },
  { label: '3D and Contour Graphs', items: ['3D Bars>', '|', '3D Surface>', '3D Scatter>', 'Contour>', 'Heatmap>', 'Image Plot'] },
  { label: 'Mask', items: ['Mask Points', 'Unmask Points', '|', 'Mask Colour', 'Mask Swap', 'Mask Toggle', '|', 'Enable Mask'] },
  {
    label: '3D Rotation',
    items: [
      'Rotate Left', 'Rotate Right', 'Tilt Left', 'Tilt Right', 'Tilt Up', 'Tilt Down', 'Perspective In', 'Perspective Out', 'Fit Frame', 'Reset Rotation', 'Reset Frame',
      { node: <Combo label="Angle" value="10" className="w-[58px]" /> },
    ],
  },
];

const leftBars: { label: string; items: Item[]; wide?: boolean }[] = [
  {
    label: 'Tools',
    wide: true,
    items: [
      'Pointer*', 'Zoom In', 'Zoom Out', 'Reader', 'Data Reader>', 'Data Selector', 'Region Mask>', 'Curve Mask>', 'Draw Data', 'Text', 'Annotation',
      'Arrow>', 'Line>', 'Rectangle>', 'Pan', 'Equation>', 'Insert Graph>', 'Pan Axis', 'Rotate 3D',
    ],
  },
  { label: 'Add Object', items: ['Line Width', 'Circles', 'Legend', 'Asterisk Bracket', 'Scale', 'Date Stamp', 'Project Stamp', 'Table'] },
];

const rightBars: { label: string; items: Item[] }[] = [
  {
    label: 'Graph',
    items: [
      'Stagger', 'Rotate Axes', 'Skew Axes', 'Reset Axes', 'Swap XY', 'Speed Mode', '|', 'Merge Layers', 'Extract Layers', 'Arrange Layers', 'Duplicate Layers', '|',
      'Axis Bottom Left', 'Axis Top', 'Axis Right', 'Axis Frame', 'Inset', 'Inset Data',
    ],
  },
  {
    label: 'Object Edit',
    items: [
      'Align Left', 'Align Right', '|', 'Align Top', 'Align Bottom', '|', 'Align Centre', 'Align Middle', '|', 'Same Width', 'Same Height', '|',
      'Distribute H', 'Distribute V', 'Bring Front', 'Send Back', '|', 'Group Edit', 'Ungroup Edit', '|', 'Group', 'Ungroup',
    ],
  },
];

/* ---------- title and menu ---------- */

const menus: [string, string][] = [
  ['文件', 'F'], ['编辑', 'E'], ['查看', 'V'], ['数据 ', 'D'], ['绘图', 'P'], ['列', 'C'], ['工作表', 'K'], ['格式', 'O'], ['分析', 'A'],
  ['统计', 'S'], ['图像', 'I'], ['工具', 'T'], ['设置', 'R'], ['连接', 'N'], ['窗口', 'W'], ['社交', 'J'], ['帮助', 'H'],
];

function TitleBar() {
  return (
    <header className="flex h-[23px] shrink-0 items-center bg-white">
      <svg width="16" height="16" viewBox="0 0 16 16" className="ml-[2px] mr-[5px]" aria-hidden="true">
        <path d="M7 1h8v10h-8z" fill="#dfe8ff" stroke="#3a55a8" />
        <circle cx="7" cy="9" r="6.5" fill="#d9604c" stroke="#a53a2a" />
        <path d="M3 12l4-5 3 0 2-3" fill="none" stroke="#fff" />
      </svg>
      <h1 className="flex-1 font-['Noto_Sans','Noto_Sans_CJK_SC',sans-serif] text-[13px] leading-5">OriginPro 2021 (学习版) - UNTITLED</h1>
      <div className="flex pr-[3px]">
        <button type="button" aria-label="Minimize" className="flex h-[23px] w-[45px] items-center justify-center">
          <i className="h-px w-[10px] bg-black" />
        </button>
        <button type="button" aria-label="Restore" className="flex h-[23px] w-[45px] items-center justify-center">
          <svg width="10" height="10" viewBox="-0.5 -0.5 10 10" fill="none" stroke="#000" shapeRendering="crispEdges"><path d="M0 2h7v7h-7zM2 2v-2h7v7h-2" /></svg>
        </button>
        <button type="button" aria-label="Close" className="flex h-[23px] w-[45px] items-center justify-center">
          <svg width="10" height="10" viewBox="0 0 10 10" stroke="#000"><path d="M0 0l10 10M10 0l-10 10" /></svg>
        </button>
      </div>
    </header>
  );
}

function MenuBar() {
  return (
    <nav className="flex h-6 shrink-0 items-center pl-1">
      <Grip />
      <div className="flex gap-3.5 pl-[3px]">
        {menus.map(([name, key]) => (
          <button key={name} type="button" className="whitespace-pre text-[13px] leading-5">
            {name}
            <span className="font-['Liberation_Sans',sans-serif] text-[10px]">(<u>{key}</u>)</span>
          </button>
        ))}
      </div>
    </nav>
  );
}

/* ---------- workbook window ---------- */

const sheetRows = ['长名称', '单位', '注释', 'F(x)=', '1', '2', '3', '4', '5', '6', '7', '8', '9', '10', '11'];

function ScrollArrow({ d, label, className }: { d: string; label: string; className?: string }) {
  return (
    <button type="button" aria-label={label} className={clsx('flex h-[17px] w-4 shrink-0 items-center justify-center', className)}>
      <svg width="9" height="9" viewBox="0 0 9 9" fill="none" stroke="#404040" strokeWidth="2"><path d={d} /></svg>
    </button>
  );
}

function BookWindow() {
  const frameButton = 'flex h-[18px] w-8 items-center justify-center rounded-[3px] border';
  return (
    <section
      aria-label="Book1"
      className="absolute left-5 top-5 flex h-[322px] w-[396px] flex-col rounded-t-lg border border-black bg-[#b9d1ea] px-2 pb-2 shadow-[inset_-1px_-1px_0_#3ad0ec,inset_1px_1px_0_#e4eef8]"
    >
      <div className="-mx-1.5 mt-0.5 flex h-[30px] shrink-0 items-center gap-1 rounded-t-md bg-linear-to-b from-[#9bb6d3] to-[#b9d1ea] px-1.5 pt-[3px]">
        <svg width="16" height="16" viewBox="0 0 16 16" shapeRendering="crispEdges" aria-hidden="true">
          <path d="M0 0h16v16h-16z" fill="#2f5f45" />
          <path d="M0 0h15v4h-15z" fill="#f66" />
          <path d="M0 5h4v2h-4zM5 5h4v2h-4zM10 5h4v2h-4zM0 8h4v2h-4zM5 8h4v2h-4zM10 8h4v2h-4zM0 11h4v3h-4zM5 11h4v3h-4zM10 11h4v3h-4z" fill="#5cf068" />
          <path d="M1 1h2M6 1h2M11 1h2M1 3h2M6 3h2M11 3h2" stroke="#fff" />
        </svg>
        <h2 className="flex-1 text-[13px]">Book1</h2>
        <div className="flex gap-[2px]">
          <button type="button" aria-label="Minimize" className={clsx(frameButton, 'border-[#5f7b9c] bg-linear-to-b from-[#c5d8ec] to-[#a3bdd9]')}>
            <i className="mt-1 h-[5px] w-[11px] rounded-[1px] border border-[#4d545f] bg-white" />
          </button>
          <button type="button" aria-label="Maximize" className={clsx(frameButton, 'border-[#5f7b9c] bg-linear-to-b from-[#c5d8ec] to-[#a3bdd9]')}>
            <i className="flex h-[9px] w-[11px] items-center justify-center rounded-[1px] border border-[#4d545f] bg-white">
              <i className="h-[3px] w-[5px] border border-[#4d545f] bg-[#a3bdd9]" />
            </i>
          </button>
          <button type="button" aria-label="Close" className={clsx(frameButton, 'border-[#4a1512] bg-linear-to-b from-[#dc9a90] via-[#b83a24] to-[#cf6a50]')}>
            <svg width="12" height="10" viewBox="0 0 12 10" aria-hidden="true">
              <path d="M2 1l8 8M10 1l-8 8" stroke="#4d545f" strokeWidth="4" />
              <path d="M2 1l8 8M10 1l-8 8" stroke="#fff" strokeWidth="2" />
            </svg>
          </button>
        </div>
      </div>

      <div className="flex min-h-0 flex-1 flex-col border-l border-t border-[#6f6f6f] bg-[#e0dfe4]">
        <div className="flex min-h-0 flex-1">
          <div className="min-w-0 flex-1 overflow-hidden">
            <table className="table-fixed border-separate border-spacing-0 font-['Liberation_Sans','Noto_Sans_CJK_SC',sans-serif] text-xs leading-[15px]">
              <colgroup>
                <col className="w-[86px]" />
                <col className="w-[67px]" />
                <col className="w-[67px]" />
              </colgroup>
              <thead>
                <tr className="h-6">
                  <th className="border-b border-r border-black p-0" aria-label="Rows" />
                  <th className="border-b border-r border-black p-0 font-normal">A(X)</th>
                  <th className="border-b border-r border-black p-0 font-normal">B(Y)</th>
                </tr>
              </thead>
              <tbody>
                {sheetRows.map((name, i) => {
                  const cell = clsx('border-b border-r border-[#bdbdbd] p-0', i < 3 ? 'bg-[#fafac8]' : i === 3 ? 'bg-[#f6f4b0]' : 'bg-[#f4f4f4]');
                  return (
                    <tr key={name} className="h-4">
                      <th scope="row" className="h-4 border-b border-r border-black p-0 pr-1 text-right font-normal">{name}</th>
                      <td className={cell} />
                      <td className={cell} />
                    </tr>
                  );
                })}
              </tbody>
            </table>
          </div>
          <div className="flex w-[17px] shrink-0 flex-col bg-[#f0f0f0]">
            <ScrollArrow label="Scroll up" d="M1 6l3-3 4 3" />
            <i className="mx-px h-[69px] bg-[#cdcdcd]" />
            <span className="flex-1" />
            <ScrollArrow label="Scroll down" d="M1 3l3 3 4-3" />
            <i className="h-[5px] border-y border-black bg-white" />
          </div>
        </div>
        <div className="flex h-[17px] shrink-0 bg-white">
          <div className="flex w-[264px] border-r border-black bg-[#c6c6c6]">
            {['M6 0l-4 4 4 4z', 'M2 0l4 4-4 4z'].map((d, i) => (
              <button key={d} type="button" aria-label={i ? 'Next sheet' : 'Previous sheet'} className="flex w-[17px] items-center justify-center border border-[#888] border-l-white border-t-white bg-[#f0f0f0]">
                <svg width="9" height="9" viewBox="0 0 9 9" fill="#444" className="shrink-0"><path d={d} /></svg>
              </button>
            ))}
            <div className="flex flex-1 border-t border-black">
              <button type="button" className="relative -mt-px flex h-[17px] w-[74px] items-center justify-center font-['DejaVu_Serif',serif] text-[13px] font-bold">
                <svg width="74" height="17" viewBox="0 0 74 17" className="absolute inset-0" aria-hidden="true">
                  <path d="M0 0h74l-7 17h-60z" fill="#fff" />
                  <path d="M1 0l7 17M74 0l-7 17" stroke="#000" strokeWidth="2" />
                </svg>
                <span className="relative">Sheet1</span>
              </button>
            </div>
          </div>
          <i className="w-[5px] border-r border-black bg-white" />
          <div className="flex flex-1 bg-[#f0f0f0]">
            <ScrollArrow label="Scroll left" d="M6 1l-3 3 3 4" />
            <i className="flex-1 bg-[#cdcdcd]" />
            <ScrollArrow label="Scroll right" d="M3 1l3 3-3 4" />
          </div>
          <div className="flex w-[23px] items-end justify-end border-l-[3px] border-double border-black bg-[#f0f0f0] p-0.5">
            <svg width="9" height="9" viewBox="0 0 9 9" fill="#bbb"><path d="M6 0h2v2h-2zM3 3h2v2h-2zM6 3h2v2h-2zM0 6h2v2h-2zM3 6h2v2h-2zM6 6h2v2h-2z" /></svg>
          </div>
        </div>
      </div>
    </section>
  );
}

/* ---------- right side panels ---------- */

const apps: { name: string; dim?: boolean; icon: ReactNode }[] = [
  {
    name: '添加App',
    icon: (
      <>
        <path d="M1 1h26v26h-26z" fill="#fff" stroke="#0a82c8" strokeWidth="2" />
        <path d="M0 0h28v5h-28z" fill="#0a82c8" />
        <path d="M3 6h9v12h-9z" fill="#c8c8c8" />
        <path d="M14 7h4M20 6h5v3h-5zM14 10h12v6M4 21h6M3 25h9M13 20h4v5" stroke="#bbb" fill="none" />
        <circle cx="23" cy="23" r="9" fill="#3fbf3f" stroke="#259a2b" />
        <path d="M23 17v12M17 23h12" stroke="#fff" strokeWidth="4" />
      </>
    ),
  },
  {
    name: 'Stats\nAdvisor',
    icon: (
      <>
        <path d="M15 15l15 15" stroke="#55565f" strokeWidth="2" />
        <path d="M12 1l2 7 7 1-5 5 2 8-7-4-7 3 2-7-5-6 7-1z" fill="#e8c33c" stroke="#c9a62a" />
        <path d="M21 2v5M18 5h6M3 20v5M0 23h6" stroke="#f0cf50" />
      </>
    ),
  },
  {
    name: 'Simple Fit',
    dim: true,
    icon: (
      <>
        <path d="M0 0h32v32h-32z" fill="#a9cbec" />
        <path d="M3 4v26h26M1 6l2-3 2 3M27 28l3 2-3 2" stroke="#fff" strokeWidth="2" fill="none" />
        <path d="M6 27q16 1 22-23" stroke="#f6a6d2" strokeWidth="2" fill="none" />
        <path d="M7 27h2M13 26h2M19 24h2M22 18h2M26 12h2M28 4h2" stroke="#fff" strokeWidth="2" />
      </>
    ),
  },
  {
    name: 'Sequential\nFit',
    icon: (
      <g fill="none">
        <path d="M0 19c8 0 6-18 10-18s3 18 9 18M6 24c8 0 6-18 10-18s3 18 9 18M11 30c8 0 6-18 10-18s3 18 10 18" stroke="#a08ae0" strokeWidth="3" />
        <path d="M0 19c8 0 6-18 10-18s3 18 9 18M6 24c8 0 6-18 10-18s3 18 9 18M11 30c8 0 6-18 10-18s3 18 10 18" stroke="#c03078" />
      </g>
    ),
  },
  {
    name: 'Send\nGraphs ...',
    icon: (
      <>
        <path d="M8 4l12-3v24l-12-3zM20 2h10v19h-10M22 6h6M22 10h6M22 14h6M22 18h6" fill="#fff" stroke="#343a92" />
        <text x="9" y="16" fontSize="10" fontWeight="bold" fill="#343a92">W</text>
        <path d="M2 19h6v-3l6 5-6 5v-3h-6z" fill="#1010f0" />
      </>
    ),
  },
  {
    name: 'Send\nGraphs t...',
    icon: (
      <>
        <path d="M12 4l12-4v27l-12-3zM24 4h7v18h-7" fill="#fff" stroke="#d9593a" />
        <circle cx="27" cy="10" r="3" fill="#d9472a" />
        <path d="M24 16h6M24 19h6" stroke="#d9472a" strokeWidth="2" />
        <text x="15" y="17" fontSize="10" fill="#d9472a">P</text>
        <path d="M0 24h9v-3l5 5-5 4v-3h-9z" fill="#d9472a" />
      </>
    ),
  },
  {
    name: 'Graph\nMaker',
    icon: (
      <>
        <path d="M3 2v16" stroke="#a22" strokeWidth="3" strokeDasharray="2 2" />
        <path d="M7 2v16" stroke="#282" strokeWidth="3" strokeDasharray="2 2" />
        <path d="M12 2v8" stroke="#22a" strokeWidth="3" strokeDasharray="2 2" />
        <path d="M3 28l13-11" stroke="#8a8a00" strokeWidth="5" />
        <path d="M26 10a6 6 0 1 0 1 6l-6 1-2-4z" fill="#8a8a00" stroke="#8a8a00" strokeWidth="2" />
        <path d="M16 25h4v5h-4z" fill="#900" />
        <path d="M22 23h4v7h-4z" fill="#090" />
        <path d="M28 18h4v12h-4z" fill="#00a" />
      </>
    ),
  },
  {
    name: 'Fitting\nFuncti...',
    icon: (
      <>
        <path d="M1 20v-15l3-1 2-2h7l3 3h10v3" fill="#fff" stroke="#7ab0d8" />
        <path d="M8 8h23l-6 16h-24z" fill="#0a5fa8" />
        <text x="12" y="21" fontSize="13" fontWeight="bold" fontStyle="italic" fill="#fff">F</text>
        <circle cx="25" cy="22" r="5" fill="#0a5fa8" stroke="#fff" />
        <path d="M25 19v6M22 22h6" stroke="#fff" strokeWidth="2" />
      </>
    ),
  },
];

function ObjectManager() {
  return (
    <section aria-label="对象管理器" className="flex flex-col">
      <div className="flex h-5 items-center bg-linear-to-b from-[#c0cfde] to-[#d8e5f2] pb-px pl-1 text-[13px]">
        <h2 className="flex-1">对象管理器</h2>
        <button type="button" aria-label="Menu" className="flex h-4 w-[17px] items-center justify-center">
          <span className="block h-0 w-0 border-x-[5px] border-t-[5px] border-x-transparent border-t-black" />
        </button>
        <button type="button" aria-label="Pin" className="flex h-4 w-[17px] items-center justify-center">
          <svg width="8" height="9" viewBox="-0.5 -0.5 8 9" fill="none" stroke="#000" shapeRendering="crispEdges"><path d="M2 0h3v5h-3zM5 0v5M0 5h7M4 5v4" /></svg>
        </button>
        <button type="button" aria-label="Close" className="mr-0.5 flex h-4 w-[17px] items-center justify-center">
          <svg width="9" height="8" viewBox="0 0 9 8" stroke="#000" strokeWidth="2"><path d="M1 0l7 8M8 0l-7 8" /></svg>
        </button>
      </div>
      <ul className="mr-0.5 h-[150px] border-2 border-[#7a7a7a] bg-white px-px text-xs">
        <li className="flex h-[19px] items-center">
          <button type="button" aria-label="Collapse" className="ml-0.5 mr-[3px] flex h-[9px] w-[9px] items-center justify-center border border-[#8a8a8a]">
            <i className="h-px w-[5px] bg-[#226]" />
          </button>
          <svg width="16" height="14" viewBox="0 0 16 14" className="mr-[2px]" aria-hidden="true">
            <path d="M1 12v-10h5l2 2h6v3" fill="#f3cf6a" stroke="#a77a1e" />
            <path d="M1 13l3-7h12l-3 7z" fill="#fbe08e" stroke="#a77a1e" />
          </svg>
          Book1
        </li>
        <li className="flex h-[18px] items-center border border-dotted border-[#ffc] bg-[#0078d7] text-white">
          <i className="ml-1.5 mr-[13px] h-2 w-2 border-b border-l border-dotted border-white/60 pb-2" />
          Sheet1
        </li>
      </ul>
    </section>
  );
}

function AppsPanel() {
  const scroll = ['M1 0h8v1h-8zM5 3l4 4h-8z', 'M5 1l4 4h-8z', 'M1 2h8l-4 4z', 'M1 0h8l-4 4zM1 6h8v1h-8z'];
  return (
    <section aria-label="Apps" className="mt-[5px] flex min-h-0 flex-1 flex-col">
      <h2 className="h-[19px] bg-linear-to-b from-[#c0cfde] to-[#d8e5f2] pl-1 text-[13px] leading-[19px]">Apps</h2>
      <div className="flex min-h-0 flex-1 bg-[#f0f0f0]">
        <div className="flex w-[21px] shrink-0 flex-col items-center">
          {scroll.map((d, i) => (
            <button key={d} type="button" aria-label={`Scroll ${i + 1}`} className="flex h-[17px] w-4 items-center justify-center">
              <svg width="10" height="8" viewBox="0 0 10 8"><path d={d} /></svg>
            </button>
          ))}
          <div role="tablist" className="relative mt-px flex w-full flex-col text-xs">
            <svg width="21" height="96" viewBox="0 0 21 96" className="absolute left-0 top-0" fill="none" stroke="#555" aria-hidden="true">
              <path d="M21 2l-15 9v27l15 9z" fill="#fff" stroke="none" />
              <path d="M21 1l-16 10v28l8 5M21 48l-8-4-8 5v29l16 16" />
            </svg>
            <button type="button" role="tab" aria-selected="true" className="relative h-[46px] w-5 pl-[3px] font-bold [text-orientation:sideways] [writing-mode:vertical-rl]">所有</button>
            <button type="button" role="tab" aria-selected="false" className="relative h-[38px] w-5 pl-[3px] [text-orientation:sideways] [writing-mode:vertical-rl]">连接器</button>
          </div>
        </div>
        <ul className="mr-0.5 flex min-h-0 flex-1 flex-col overflow-hidden border border-[#8a8a8a] bg-white pt-[5px] text-xs">
          {apps.map((app) => (
            <li key={app.name} className="h-[75px] w-[72px] shrink-0">
              <button type="button" className={clsx('flex w-full flex-col items-center gap-[3px]', app.dim && 'text-[#777]')}>
                <svg width="32" height="32" viewBox="0 0 32 32" fill="none" className="font-['Liberation_Sans',sans-serif]" aria-hidden="true">{app.icon}</svg>
                <span className="whitespace-pre leading-[17px]">{app.name}</span>
              </button>
            </li>
          ))}
        </ul>
      </div>
    </section>
  );
}

function InputBadge() {
  return (
    <aside className="absolute right-1 top-[234px] h-[104px] w-[63px] rounded-[18px] border border-[#4f8a12] bg-linear-to-b from-[#8cc63a] via-[#6fae22] to-[#4a8f00] text-[#2f5f08] shadow-[0_1px_3px_rgba(0,0,0,0.5),inset_0_3px_2px_-1px_#c8ec90]">
      <i className="mx-auto mt-[17px] block h-3 w-3 rounded-full border border-[#6a8f50] bg-[#eee] shadow-[0_2px_2px_#b5e070]" />
      <div className="mt-2.5 flex justify-around px-1.5 text-lg leading-6">
        <span>英</span>
        <span>半</span>
      </div>
      <div className="flex items-center justify-around px-1.5 text-sm leading-6">
        <span>•,</span>
        <svg width="16" height="13" viewBox="0 0 16 13" fill="#2f6a08" aria-hidden="true"><path d="M5 0q3 2 6 0l5 3-2 4-2-1v7h-8v-7l-2 1-2-4z" /></svg>
      </div>
    </aside>
  );
}

/* ---------- page ---------- */

const sideTabs = [
  { name: '项目管理器（1）', size: 'h-[112px]' },
  { name: '消息日志', size: 'h-[76px]' },
  { name: '提示日志', size: 'h-[76px]' },
];

export default function App() {
  return (
    <div className="relative flex h-screen flex-col overflow-hidden bg-linear-to-r from-[#ebecfb] to-[#f2f6fe] font-['Open_Sans','Noto_Sans_CJK_SC',sans-serif] text-black">
      <TitleBar />
      <MenuBar />
      <div className="flex h-[26px] shrink-0">{row1.map((bar) => <Bar key={bar.label} {...bar} />)}</div>
      <div className="flex h-[26px] shrink-0">{row2.map((bar) => <Bar key={bar.label} {...bar} />)}</div>

      <div className="flex min-h-0 flex-1">
        <div className="flex w-[21px] shrink-0 flex-col gap-[14px] bg-[#eaebfb] pt-1">
          {sideTabs.map((tab) => (
            <button
              key={tab.name}
              type="button"
              className={clsx('w-[19px] border-b border-r border-[#cfcfd6] bg-[#f0f0f0] pr-px pt-[3px] text-left text-xs leading-[17px] text-[#555] [text-orientation:sideways] [writing-mode:vertical-rl]', tab.size)}
            >
              {tab.name}
            </button>
          ))}
        </div>
        <div className="flex w-9 shrink-0 flex-col bg-[#eaebfb]">{leftBars.map((bar) => <Bar key={bar.label} vertical {...bar} />)}</div>

        <div className="flex min-w-0 flex-1 flex-col">
          <main className="relative min-h-0 flex-1 border-b-2 border-r border-b-white border-l-2 border-t-2 border-l-[#696969] border-r-white border-t-[#696969] bg-[#ababab]">
            <BookWindow />
          </main>
          <div className="flex h-[27px] shrink-0 pt-px">{bottomRow.map((bar) => <Bar key={bar.label} {...bar} />)}</div>
        </div>

        <div className="flex w-[31px] shrink-0 flex-col bg-[#eaebfb] pl-px">{rightBars.map((bar) => <Bar key={bar.label} vertical {...bar} />)}</div>
        <div className="flex w-[152px] shrink-0 flex-col bg-[#f0f3fb]">
          <ObjectManager />
          <AppsPanel />
        </div>
      </div>

      <footer className="relative flex h-5 shrink-0 items-center border-t border-[#d4d4dc] bg-[#f0f0f0] pl-[35px] text-xs">
        <span>&lt;&lt;</span>
        <span className="flex-1 pl-1.5 text-[13px]">【开始】菜单 <span className="text-[11px]">(F1)</span></span>
        <span className="absolute right-2 text-[15px] leading-4 text-[#d8d8d8]">https://blog.csdn.net/smileyah9</span>
        <span className="relative pr-3.5 font-['Noto_Sans','Noto_Sans_CJK_SC',sans-serif]">平均值=0 求和=0 计数=0</span>
        <span className="relative pr-[26px]">AU : 开</span>
      </footer>
      <div className="flex h-2 shrink-0 overflow-hidden bg-[#2c3428] text-xs leading-4 text-white">
        <i className="ml-[296px] h-2 w-12 bg-[#59625a]" />
        <span className="ml-auto border-r border-[#777] pr-[68px] pt-[3px]">20:56</span>
        <span className="w-1" />
      </div>

      <button type="button" aria-label="开始" className="absolute bottom-[7px] left-[2px] h-[30px] w-[30px] rounded-full border border-[#c8452e] bg-radial from-[#f6a48f] to-[#d9452c]">
        <svg width="28" height="28" viewBox="0 0 28 28" fill="none" aria-hidden="true">
          <path d="M8 9h15M8 14h15M8 19h15M9 7v15M14 7v15M19 7v15" stroke="#f9c3b4" />
          <path d="M9 22l4-4 2-10 4 4 3-6" stroke="#4a5568" />
          <path d="M8 22h2M13 18h2M15 8h2M18 12h2M21 6h2" stroke="#4a5568" strokeWidth="2" />
        </svg>
      </button>
      <InputBadge />
    </div>
  );
}
